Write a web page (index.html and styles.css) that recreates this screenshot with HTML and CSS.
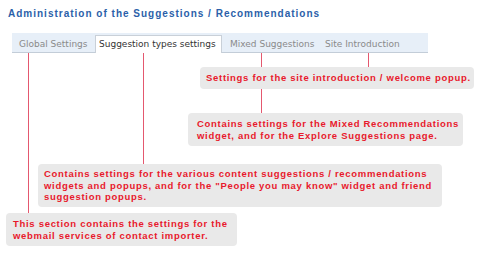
FILE: index.html
```html
<!DOCTYPE html>
<html>
<head>
<meta charset="utf-8">
<link rel="stylesheet" href="styles.css">
</head>
<body>
<div class="page">
  <div class="title">Administration of the Suggestions / Recommendations</div>
  <div class="tabs">
    <div class="tab tab-global">Global Settings</div>
    <div class="tab tab-active">Suggestion types settings</div>
    <div class="tab tab-mixed">Mixed Suggestions</div>
    <div class="tab tab-site">Site Introduction</div>
  </div>
  <div class="diagram">
    <div class="line line-global"></div>
    <div class="line line-types"></div>
    <div class="line line-mixed"></div>
    <div class="line line-site"></div>
    <div class="note note-site">Settings for the site introduction / welcome popup.</div>
    <div class="note note-mixed">Contains settings for the Mixed Recommendations<br>widget, and for the Explore Suggestions page.</div>
    <div class="note note-types">Contains settings for the various content suggestions / recommendations<br>widgets and popups, and for the "People you may know" widget and friend<br>suggestion popups.</div>
    <div class="note note-global">This section contains the settings for the<br>webmail services of contact importer.</div>
  </div>
</div>
</body>
</html>
```
FILE: styles.css
```css
html, body {
  margin: 0;
  padding: 0;
  background: #ffffff;
}
.page {
  width: 480px;
  height: 257px;
  padding: 8px 0 0 0;
  box-sizing: border-box;
  overflow: hidden;
}
.title {
  margin-left: 8px;
  font-family: "Liberation Sans", Arial, sans-serif;
  font-weight: bold;
  font-size: 10px;
  line-height: 12px;
  letter-spacing: 1px;
  color: #2b5fa9;
  white-space: nowrap;
}
.tabs {
  margin: 13px 0 0 12px;
  width: 416px;
  height: 19px;
  background: #e7eff8;
  border-bottom: 1px solid #c3cdd8;
  display: flex;
  align-items: flex-end;
}
.tab {
  box-sizing: border-box;
  height: 17px;
  line-height: 16px;
  font-family: "DejaVu Sans", Verdana, sans-serif;
  font-size: 9px;
  color: #8a8a8a;
  white-space: nowrap;
  border: 1px solid transparent;
  border-bottom: none;
}
.tab-global {
  width: 83px;
  padding-left: 6px;
}
.tab-active {
  width: 127px;
  height: 18px;
  margin-bottom: -1px;
  padding-left: 3px;
  background: #ffffff;
  border-color: #c9d0d8;
  color: #333333;
}
.tab-mixed {
  width: 95px;
  padding-left: 7px;
}
.tab-site {
  width: 100px;
  padding-left: 7px;
}
.diagram {
  position: relative;
  height: 204px;
}
.line {
  position: absolute;
  top: 0;
  width: 1px;
  background: #e4586f;
}
.line-global { left: 28px; height: 160px; }
.line-types { left: 143px; height: 111px; }
.line-mixed { left: 261px; height: 60px; }
.line-site { left: 368px; height: 14px; }
.note {
  position: absolute;
  box-sizing: border-box;
  background: #e9e9e9;
  border-radius: 4px;
  padding: 5px 6px;
  font-family: "Liberation Sans", Arial, sans-serif;
  font-weight: bold;
  font-size: 9.5px;
  line-height: 11.5px;
  letter-spacing: 0.7px;
  color: #e8192c;
  white-space: nowrap;
}
.note-site { left: 200px; top: 14px; width: 274px; }
.note-mixed { left: 188px; top: 60px; width: 275px; padding-left: 9px; }
.note-types { left: 38px; top: 111px; width: 404px; padding-top: 4px; padding-bottom: 4px; }
.note-global { left: 6px; top: 160px; width: 231px; padding-left: 7px; }
```
